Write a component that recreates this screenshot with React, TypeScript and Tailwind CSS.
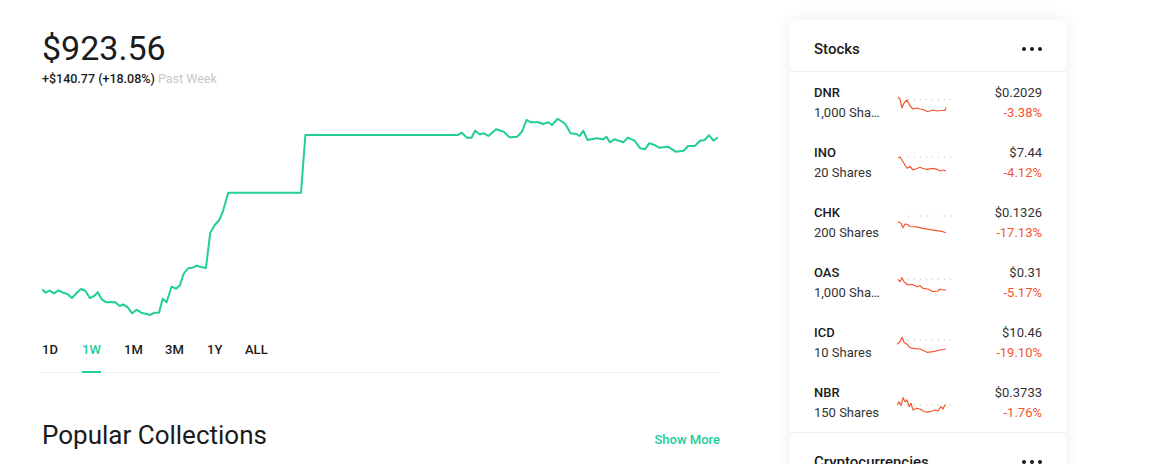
import React from 'react';

const GREEN = '#21ce99';
const RED = '#f45531';

// main chart, points read off the picture (x in px from left, y in px from top)
const chartRaw: [number, number][] = [
  [28, 568], [36, 578], [45, 572], [55, 580], [65, 571], [75, 578], [85, 582], [95, 594], [105, 580],
  [115, 567], [125, 572], [135, 594], [145, 588], [153, 577], [162, 598], [172, 607], [182, 606],
  [192, 607], [202, 618], [210, 613], [220, 622], [230, 640], [240, 629], [250, 638], [260, 641],
  [270, 645], [280, 638], [290, 638], [298, 596], [307, 607], [318, 560], [328, 566], [337, 556],
  [345, 522], [355, 505], [365, 503], [375, 497], [385, 501], [395, 504], [405, 398], [415, 375],
  [425, 360], [433, 335], [445, 278], [608, 278], [618, 105], [960, 105], [968, 98], [980, 113],
  [990, 113], [998, 92], [1008, 103], [1018, 100], [1028, 108], [1045, 88], [1062, 95], [1075, 112],
  [1092, 110], [1103, 95], [1113, 60], [1123, 67], [1140, 67], [1150, 72], [1162, 67], [1170, 75],
  [1183, 56], [1200, 72], [1212, 100], [1225, 102], [1232, 108], [1240, 92], [1250, 120], [1270, 115],
  [1285, 118], [1292, 110], [1300, 127], [1310, 118], [1330, 127], [1340, 113], [1355, 122],
  [1368, 145], [1378, 148], [1388, 130], [1400, 135], [1410, 143], [1430, 140], [1447, 155],
  [1465, 152], [1475, 138], [1490, 138], [1502, 122], [1512, 120], [1522, 106], [1532, 122], [1542, 112],
];
const chartPath = chartRaw
  .map(([x, y], i) => `${i ? 'L' : 'M'}${((x - 28) * 0.4465).toFixed(1)} ${(y / 3).toFixed(1)}`)
  .join(' ');

type Stock = {
  sym: string;
  shares: string;
  price: string;
  change: string;
  base: number;
  line: [number, number][];
};

const stocks: Stock[] = [
  {
    sym: 'DNR', shares: '1,000 Shares', price: '$0.2029', change: '-3.38%', base: 8.5,
    line: [[1, 6.3], [3, 8], [5, 17], [7, 12], [10, 9], [13, 15], [16, 18], [20, 17], [23, 18], [26, 18.5], [30, 20.5], [33, 20], [36, 19], [40, 20], [43, 19.5], [46, 19.5], [48, 19.5], [49, 16.5]],
  },
  {
    sym: 'INO', shares: '20 Shares', price: '$7.44', change: '-4.12%', base: 6,
    line: [[1, 6.7], [3, 6], [6, 10.7], [10, 17.3], [13, 15.5], [16, 19], [20, 17.5], [23, 16.3], [26, 17.5], [30, 18.3], [36, 17.3], [40, 18.3], [43, 20], [46, 19], [49, 20]],
  },
  {
    sym: 'CHK', shares: '200 Shares', price: '$0.1326', change: '-17.13%', base: 5,
    line: [[1, 10.7], [4, 12.3], [6, 16.7], [8, 13], [10, 13.3], [13, 15.5], [20, 15.8], [26, 17.3], [33, 18.7], [40, 19.7], [46, 20.7], [49, 21.7]],
  },
  {
    sym: 'OAS', shares: '1,000 Shares', price: '$0.31', change: '-5.17%', base: 8.3,
    line: [[1, 8.3], [3, 10.7], [5, 6.7], [7, 10.7], [11, 14], [15, 13.3], [20, 15.7], [23, 14.7], [26, 17.3], [31, 18], [36, 20.7], [41, 20], [43, 18], [46, 19], [49, 19]],
  },
  {
    sym: 'ICD', shares: '10 Shares', price: '$10.46', change: '-19.10%', base: 9,
    line: [[0.3, 13.3], [3, 10.7], [5, 6.3], [7, 11.3], [10, 13.3], [13, 16.7], [16, 17.3], [23, 18], [30, 21.3], [36, 20.7], [43, 19], [49, 18]],
  },
  {
    sym: 'NBR', shares: '150 Shares', price: '$0.3733', change: '-1.76%', base: 14,
    line: [[0.3, 14], [2, 10.7], [4, 14.7], [6, 6.7], [8, 10.7], [10, 9], [12, 15.7], [14, 12.3], [16, 19], [20, 17.3], [23, 18], [26, 20], [30, 21.3], [35, 20], [38, 19], [41, 20], [44, 15.7], [46, 18], [47.5, 14.7], [49, 14]],
  },
];

function Dots() {
  return (
    <svg width="20" height="6" viewBox="0 0 20 6">
      <circle cx="2" cy="3" r="2" fill="#1b1b1b" />
      <circle cx="10" cy="3" r="2" fill="#1b1b1b" />
      <circle cx="18" cy="3" r="2" fill="#1b1b1b" />
    </svg>
  );
}

function Spark({ s }: { s: Stock }) {
  const d = s.line.map(([x, y], i) => `${i ? 'L' : 'M'}${x} ${y}`).join(' ');
  const dots = [];
  for (let x = 11; x <= 56; x += 6) dots.push(x);
  return (
    <svg width="58" height="24" viewBox="0 0 58 24" className="shrink-0">
      {dots.map(x => (
        <rect key={x} x={x} y={s.base - 0.5} width="1" height="1" fill="#bdbdbd" />
      ))}
      <path d={d} fill="none" stroke={RED} strokeWidth="1.2" strokeLinejoin="round" />
    </svg>
  );
}

export default function App() {
  const tabs = [
    { label: '1D', w: 'w-[40px]' },
    { label: '1W', w: 'w-[42px]' },
    { label: '1M', w: 'w-[41px]' },
    { label: '3M', w: 'w-[42px]' },
    { label: '1Y', w: 'w-[38px]' },
    { label: 'ALL', w: 'w-[40px]' },
  ];

  return (
    <div className="flex min-h-[464px] bg-white pl-[42px] font-['Roboto','Noto_Sans',sans-serif] text-[#1b1b1b] antialiased">
      {/* left column */}
      <div className="flex w-[676px] shrink-0 flex-col pt-[28px]">
        <div className="text-[34px] leading-[40px]">$923.56</div>
        <div className="mt-[3px] text-[12.5px] leading-4 font-medium">
          +$140.77 (+18.08%) <span className="font-normal text-[#c7c7c9]">Past Week</span>
        </div>

        <svg width="676" height="230" className="mt-[13px]" viewBox="0 0 676 230">
          <path d={chartPath} fill="none" stroke={GREEN} strokeWidth="2" strokeLinejoin="round" />
        </svg>

        <div className="mt-[7px] flex border-b border-[#eeeeee]">
          {tabs.map(t => (
            <div key={t.label} className={`${t.w} -mb-px`}>
              <span
                className={`inline-block border-b-2 pb-[11px] text-[13px] leading-5 font-medium ${
                  t.label === '1W' ? 'border-[#21ce99] text-[#21ce99]' : 'border-transparent'
                }`}
              >
                {t.label}
              </span>
            </div>
          ))}
        </div>

        <div className="mt-[46px] flex items-baseline justify-between">
          <div className="text-[26px] leading-8">Popular Collections</div>
          <div className="mr-[-2px] text-[13px] font-medium text-[#21ce99]">Show More</div>
        </div>
      </div>

      {/* right card */}
      <div className="ml-[72px] pt-[20px]">
        <div className="w-[276px] rounded-md bg-white shadow-[0_0_18px_rgba(0,0,0,0.07)]">
          <div className="flex items-center justify-between border-b border-[#efefef] px-6 pt-[17px] pb-[10px]">
            <div className="text-[15px] leading-6 font-medium">Stocks</div>
            <Dots />
          </div>
          <div className="border-b border-[#efefef]">
            {stocks.map(s => (
              <div key={s.sym} className="flex items-center px-6 pt-[11px] pb-[9px]">
                <div className="w-[68px] shrink-0 text-[13px] leading-5">
                  <div className="font-medium">{s.sym}</div>
                  <div className="truncate text-[#333333]">{s.shares}</div>
                </div>
                <div className="ml-[15px]">
                  <Spark s={s} />
                </div>
                <div className="flex-1 text-right text-[13px] leading-5">
                  <div className="text-[#333333]">{s.price}</div>
                  <div style={{ color: RED }}>{s.change}</div>
                </div>
              </div>
            ))}
          </div>
          <div className="flex items-center justify-between px-6 pt-[17px] pb-[10px]">
            <div className="text-[15px] leading-6 font-medium">Cryptocurrencies</div>
            <Dots />
          </div>
        </div>
      </div>
    </div>
  );
}
